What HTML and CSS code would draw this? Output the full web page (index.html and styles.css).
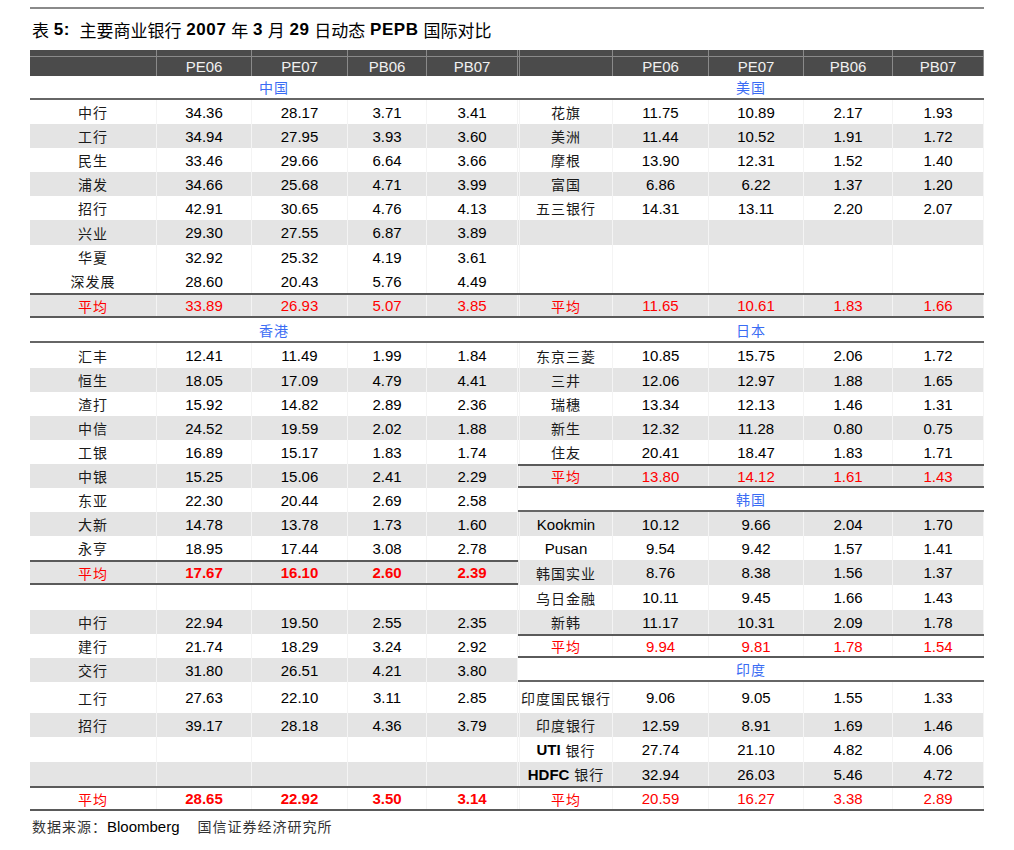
FILE: index.html
```html
<!DOCTYPE html>
<html lang="zh">
<head>
<meta charset="utf-8">
<title>表5 主要商业银行动态PEPB国际对比</title>
<link rel="stylesheet" href="styles.css">
</head>
<body>
<div class="page">
  <div class="topline"></div>
  <div class="title">表 <b>5:</b>&nbsp; 主要商业银行 <b>2007</b> 年 <b>3</b> 月 <b>29</b> 日动态 <b>PEPB</b> 国际对比</div>
  <div class="tables">
    <div class="half half-l">
      <div class="row hd1"><div class="c"></div><div class="c"></div><div class="c"></div><div class="c"></div><div class="c"></div></div>
      <div class="row hd2"><div class="c"></div><div class="c">PE06</div><div class="c">PE07</div><div class="c">PB06</div><div class="c">PB07</div></div>
      <div class="sec">中国</div>
      <div class="row"><div class="c n">中行</div><div class="c">34.36</div><div class="c">28.17</div><div class="c">3.71</div><div class="c">3.41</div></div>
      <div class="row g"><div class="c n">工行</div><div class="c">34.94</div><div class="c">27.95</div><div class="c">3.93</div><div class="c">3.60</div></div>
      <div class="row"><div class="c n">民生</div><div class="c">33.46</div><div class="c">29.66</div><div class="c">6.64</div><div class="c">3.66</div></div>
      <div class="row g"><div class="c n">浦发</div><div class="c">34.66</div><div class="c">25.68</div><div class="c">4.71</div><div class="c">3.99</div></div>
      <div class="row"><div class="c n">招行</div><div class="c">42.91</div><div class="c">30.65</div><div class="c">4.76</div><div class="c">4.13</div></div>
      <div class="row g h25"><div class="c n">兴业</div><div class="c">29.30</div><div class="c">27.55</div><div class="c">6.87</div><div class="c">3.89</div></div>
      <div class="row"><div class="c n">华夏</div><div class="c">32.92</div><div class="c">25.32</div><div class="c">4.19</div><div class="c">3.61</div></div>
      <div class="row"><div class="c n">深发展</div><div class="c">28.60</div><div class="c">20.43</div><div class="c">5.76</div><div class="c">4.49</div></div>
      <div class="row g h25 bt bb red"><div class="c n">平均</div><div class="c">33.89</div><div class="c">26.93</div><div class="c">5.07</div><div class="c">3.85</div></div>
      <div class="sec h25">香港</div>
      <div class="row h25"><div class="c n">汇丰</div><div class="c">12.41</div><div class="c">11.49</div><div class="c">1.99</div><div class="c">1.84</div></div>
      <div class="row g"><div class="c n">恒生</div><div class="c">18.05</div><div class="c">17.09</div><div class="c">4.79</div><div class="c">4.41</div></div>
      <div class="row"><div class="c n">渣打</div><div class="c">15.92</div><div class="c">14.82</div><div class="c">2.89</div><div class="c">2.36</div></div>
      <div class="row g"><div class="c n">中信</div><div class="c">24.52</div><div class="c">19.59</div><div class="c">2.02</div><div class="c">1.88</div></div>
      <div class="row"><div class="c n">工银</div><div class="c">16.89</div><div class="c">15.17</div><div class="c">1.83</div><div class="c">1.74</div></div>
      <div class="row g"><div class="c n">中银</div><div class="c">15.25</div><div class="c">15.06</div><div class="c">2.41</div><div class="c">2.29</div></div>
      <div class="row"><div class="c n">东亚</div><div class="c">22.30</div><div class="c">20.44</div><div class="c">2.69</div><div class="c">2.58</div></div>
      <div class="row g"><div class="c n">大新</div><div class="c">14.78</div><div class="c">13.78</div><div class="c">1.73</div><div class="c">1.60</div></div>
      <div class="row"><div class="c n">永亨</div><div class="c">18.95</div><div class="c">17.44</div><div class="c">3.08</div><div class="c">2.78</div></div>
      <div class="row g h25 bt bb red bold"><div class="c n">平均</div><div class="c">17.67</div><div class="c">16.10</div><div class="c">2.60</div><div class="c">2.39</div></div>
      <div class="row h25"><div class="c"></div><div class="c"></div><div class="c"></div><div class="c"></div><div class="c"></div></div>
      <div class="row g"><div class="c n">中行</div><div class="c">22.94</div><div class="c">19.50</div><div class="c">2.55</div><div class="c">2.35</div></div>
      <div class="row"><div class="c n">建行</div><div class="c">21.74</div><div class="c">18.29</div><div class="c">3.24</div><div class="c">2.92</div></div>
      <div class="row g"><div class="c n">交行</div><div class="c">31.80</div><div class="c">26.51</div><div class="c">4.21</div><div class="c">3.80</div></div>
      <div class="row h31"><div class="c n">工行</div><div class="c">27.63</div><div class="c">22.10</div><div class="c">3.11</div><div class="c">2.85</div></div>
      <div class="row g"><div class="c n">招行</div><div class="c">39.17</div><div class="c">28.18</div><div class="c">4.36</div><div class="c">3.79</div></div>
      <div class="row h25"><div class="c"></div><div class="c"></div><div class="c"></div><div class="c"></div><div class="c"></div></div>
      <div class="row g"><div class="c"></div><div class="c"></div><div class="c"></div><div class="c"></div><div class="c"></div></div>
      <div class="row h25 bt bb red bold"><div class="c n">平均</div><div class="c">28.65</div><div class="c">22.92</div><div class="c">3.50</div><div class="c">3.14</div></div>
    </div>
    <div class="half half-r">
      <div class="row hd1"><div class="c"></div><div class="c"></div><div class="c"></div><div class="c"></div><div class="c"></div><div class="c"></div></div>
      <div class="row hd2"><div class="c"></div><div class="c"></div><div class="c">PE06</div><div class="c">PE07</div><div class="c">PB06</div><div class="c">PB07</div></div>
      <div class="sec">美国</div>
      <div class="row"><div class="c"></div><div class="c n">花旗</div><div class="c">11.75</div><div class="c">10.89</div><div class="c">2.17</div><div class="c">1.93</div></div>
      <div class="row g"><div class="c"></div><div class="c n">美洲</div><div class="c">11.44</div><div class="c">10.52</div><div class="c">1.91</div><div class="c">1.72</div></div>
      <div class="row"><div class="c"></div><div class="c n">摩根</div><div class="c">13.90</div><div class="c">12.31</div><div class="c">1.52</div><div class="c">1.40</div></div>
      <div class="row g"><div class="c"></div><div class="c n">富国</div><div class="c">6.86</div><div class="c">6.22</div><div class="c">1.37</div><div class="c">1.20</div></div>
      <div class="row"><div class="c"></div><div class="c n">五三银行</div><div class="c">14.31</div><div class="c">13.11</div><div class="c">2.20</div><div class="c">2.07</div></div>
      <div class="row g h25"><div class="c"></div><div class="c"></div><div class="c"></div><div class="c"></div><div class="c"></div><div class="c"></div></div>
      <div class="row"><div class="c"></div><div class="c"></div><div class="c"></div><div class="c"></div><div class="c"></div><div class="c"></div></div>
      <div class="row"><div class="c"></div><div class="c"></div><div class="c"></div><div class="c"></div><div class="c"></div><div class="c"></div></div>
      <div class="row g h25 bt bb red"><div class="c"></div><div class="c n">平均</div><div class="c">11.65</div><div class="c">10.61</div><div class="c">1.83</div><div class="c">1.66</div></div>
      <div class="sec h25">日本</div>
      <div class="row h25"><div class="c"></div><div class="c n">东京三菱</div><div class="c">10.85</div><div class="c">15.75</div><div class="c">2.06</div><div class="c">1.72</div></div>
      <div class="row g"><div class="c"></div><div class="c n">三井</div><div class="c">12.06</div><div class="c">12.97</div><div class="c">1.88</div><div class="c">1.65</div></div>
      <div class="row"><div class="c"></div><div class="c n">瑞穗</div><div class="c">13.34</div><div class="c">12.13</div><div class="c">1.46</div><div class="c">1.31</div></div>
      <div class="row g"><div class="c"></div><div class="c n">新生</div><div class="c">12.32</div><div class="c">11.28</div><div class="c">0.80</div><div class="c">0.75</div></div>
      <div class="row"><div class="c"></div><div class="c n">住友</div><div class="c">20.41</div><div class="c">18.47</div><div class="c">1.83</div><div class="c">1.71</div></div>
      <div class="row g bt bb red"><div class="c"></div><div class="c n">平均</div><div class="c">13.80</div><div class="c">14.12</div><div class="c">1.61</div><div class="c">1.43</div></div>
      <div class="sec">韩国</div>
      <div class="row g"><div class="c"></div><div class="c">Kookmin</div><div class="c">10.12</div><div class="c">9.66</div><div class="c">2.04</div><div class="c">1.70</div></div>
      <div class="row"><div class="c"></div><div class="c">Pusan</div><div class="c">9.54</div><div class="c">9.42</div><div class="c">1.57</div><div class="c">1.41</div></div>
      <div class="row g h25"><div class="c"></div><div class="c n">韩国实业</div><div class="c">8.76</div><div class="c">8.38</div><div class="c">1.56</div><div class="c">1.37</div></div>
      <div class="row h25"><div class="c"></div><div class="c n">乌日金融</div><div class="c">10.11</div><div class="c">9.45</div><div class="c">1.66</div><div class="c">1.43</div></div>
      <div class="row g"><div class="c"></div><div class="c n">新韩</div><div class="c">11.17</div><div class="c">10.31</div><div class="c">2.09</div><div class="c">1.78</div></div>
      <div class="row bt bb red"><div class="c"></div><div class="c n">平均</div><div class="c">9.94</div><div class="c">9.81</div><div class="c">1.78</div><div class="c">1.54</div></div>
      <div class="sec">印度</div>
      <div class="row h31"><div class="c"></div><div class="c n">印度国民银行</div><div class="c">9.06</div><div class="c">9.05</div><div class="c">1.55</div><div class="c">1.33</div></div>
      <div class="row g"><div class="c"></div><div class="c n">印度银行</div><div class="c">12.59</div><div class="c">8.91</div><div class="c">1.69</div><div class="c">1.46</div></div>
      <div class="row h25"><div class="c"></div><div class="c n"><b class="lat">UTI</b>&nbsp;银行</div><div class="c">27.74</div><div class="c">21.10</div><div class="c">4.82</div><div class="c">4.06</div></div>
      <div class="row g"><div class="c"></div><div class="c n"><b class="lat">HDFC</b>&nbsp;银行</div><div class="c">32.94</div><div class="c">26.03</div><div class="c">5.46</div><div class="c">4.72</div></div>
      <div class="row h25 bt bb red"><div class="c"></div><div class="c n">平均</div><div class="c">20.59</div><div class="c">16.27</div><div class="c">3.38</div><div class="c">2.89</div></div>
    </div>
  </div>
  <div class="source">数据来源：<span class="src-en">Bloomberg</span>国信证券经济研究所</div>
</div>
</body>
</html>
```

FILE: styles.css
```css
* { box-sizing: border-box; margin: 0; padding: 0; }
body {
  font-family: "Liberation Sans", "Noto Sans CJK SC", sans-serif;
  color: #000;
  background: #fff;
}
.page { padding: 7px 0 0 30px; width: 1014px; }
.topline { width: 954px; border-top: 2px solid #8a8a8a; }
.title {
  height: 41px;
  display: flex;
  align-items: center;
  padding-left: 2px;
  font-size: 17px;
  color: #000;
  white-space: pre;
}
.title b { font-weight: bold; letter-spacing: 0.6px; }
.tables { display: flex; }
.half-l { width: 488px; }
.half-r { width: 466px; }
.row { display: grid; height: 24px; }
.half-l .row { grid-template-columns: 127px 95px 96px 79px 91px; }
.half-r .row { grid-template-columns: 2px 93px 96px 95px 89px 91px; }
.h25 { height: 25px; }
.h31 { height: 31px; }
.c {
  display: flex;
  align-items: center;
  justify-content: center;
  font-size: 15px;
  border-right: 1px solid #f4f4f4;
  white-space: nowrap;
  overflow: visible;
}
.n { font-size: 14px; letter-spacing: 1px; color: #1a1a1a; }
.lat { font-family: "Liberation Sans", sans-serif; font-size: 15px; letter-spacing: 0; color: #000; }
.g { background: #e4e4e4; }
.bt { border-top: 2px solid #5a5a5a; }
.bb { border-bottom: 2px solid #5a5a5a; }
.red .c { color: #ff0000; }
.bold .c { font-weight: bold; }
.bold .c.n { font-weight: normal; }
.hd1 { height: 7px; background: #4b4b4b; border-bottom: 1px solid #8a8a8a; }
.hd2 { height: 19px; background: #4b4b4b; }
.hd1 .c, .hd2 .c { border-right: 1px solid #8a8a8a; color: #f0f0f0; }
.sec {
  height: 24px;
  display: flex;
  align-items: center;
  justify-content: center;
  color: #3a6cf4;
  font-size: 14px;
  letter-spacing: 1px;
  border-bottom: 2px solid #666;
}
.sec.h25 { height: 25px; }
.source {
  height: 30px;
  display: flex;
  align-items: center;
  padding-left: 2px;
  font-size: 14px;
  letter-spacing: 1px;
  color: #333;
}
.src-en { font-size: 15px; letter-spacing: 0; color: #000; margin: 0 18px 0 0; }
```
